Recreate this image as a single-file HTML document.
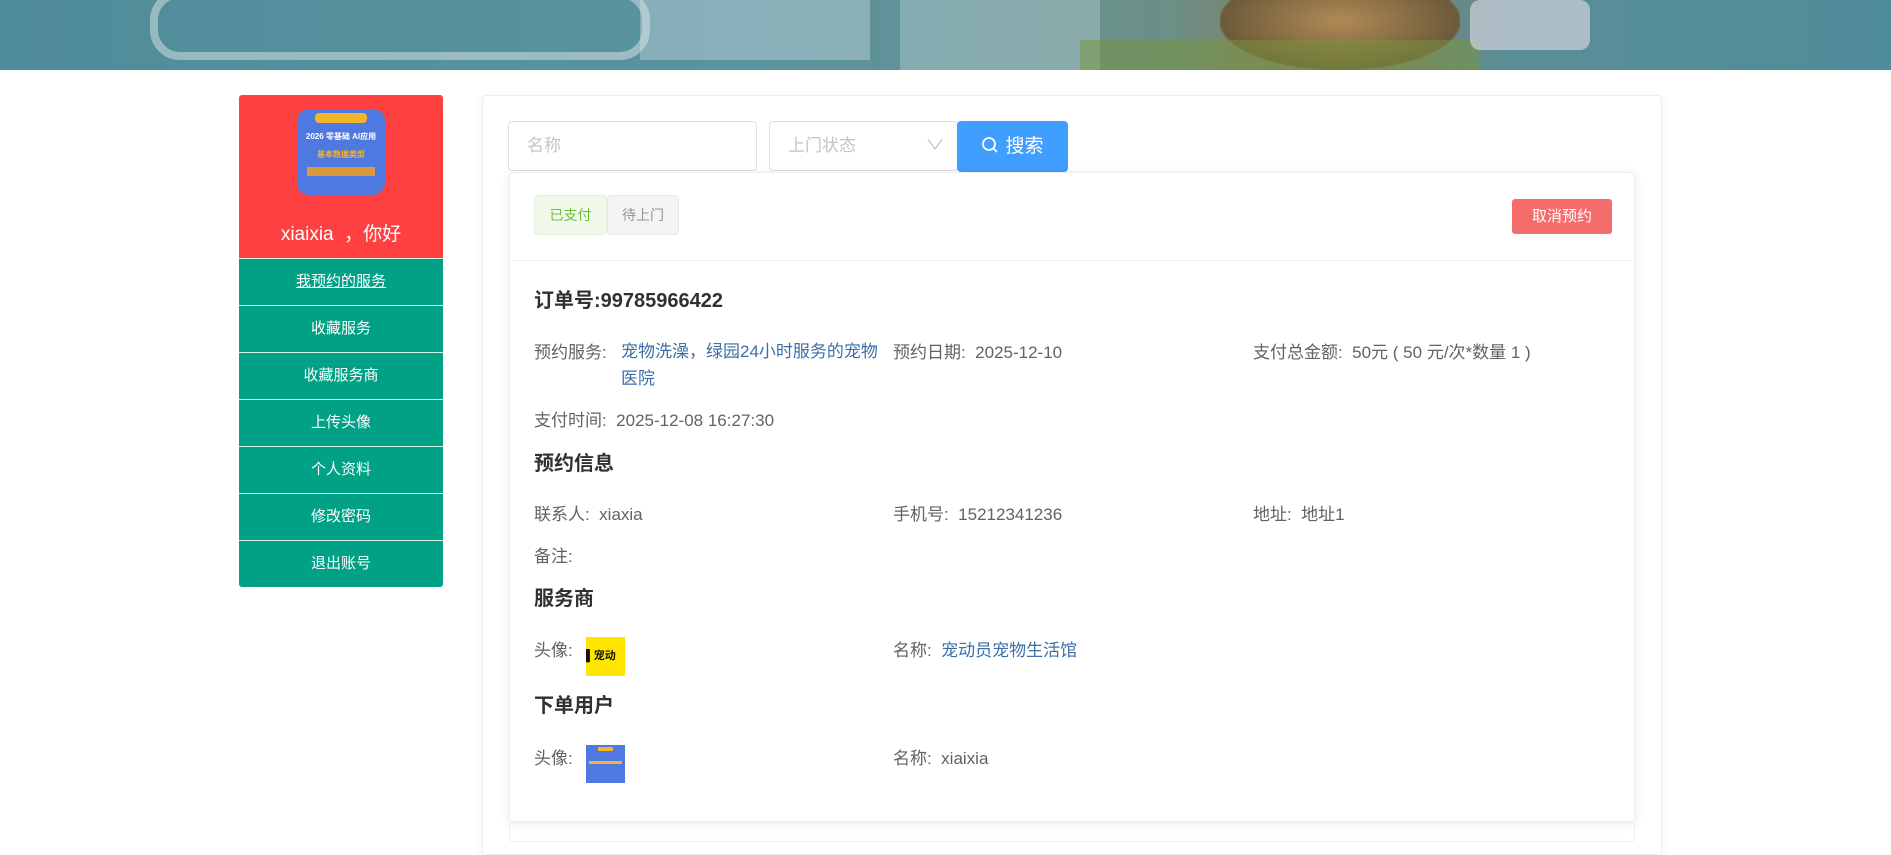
<!DOCTYPE html>
<html><head><meta charset="utf-8"><style>
*{box-sizing:border-box;margin:0;padding:0}
body{width:1891px;height:831px;overflow:hidden;background:#fff;font-family:"Liberation Sans","Noto Sans CJK SC",sans-serif;color:#606266;position:relative}
.banner{position:absolute;left:0;top:0;width:1891px;height:70px;background:linear-gradient(90deg,#4f8c99 0%,#5a94a0 40%,#6c8f86 62%,#8a7a5a 70%,#5a8f98 80%,#4f8c99 100%);overflow:hidden}
.abs{position:absolute}
.side{position:absolute;left:239px;top:95px;width:204px;border-radius:3px;overflow:hidden}
.red{background:#fe4140;height:163px;position:relative}
.av{position:absolute;left:58px;top:14px;width:88px;height:86px;border-radius:12px;background:#4f78e0;overflow:hidden}
.greet{position:absolute;left:0;width:100%;top:124px;text-align:center;color:#fff;font-size:19px}
.mi{height:47px;background:#00a184;color:#fff;text-align:center;line-height:46px;font-size:15px;border-top:1px solid #d6f0ea}
.panel{position:absolute;left:482px;top:95px;width:1180px;height:760px;border:1px solid #ebeef5;border-radius:4px;box-shadow:0 2px 12px rgba(0,0,0,.06)}
.inp{position:absolute;top:121px;height:50px;border:1px solid #dcdfe6;border-radius:4px;color:#c0c4cc;font-size:17px;line-height:48px;padding-left:18px}
.btn{position:absolute;left:957px;top:121px;width:111px;height:51px;background:#409eff;border-radius:4px;color:#fff;font-size:19px;line-height:51px;text-align:center}
.card{position:absolute;left:509px;top:172px;width:1126px;height:650px;border:1px solid #ebeef5;border-radius:4px;box-shadow:0 2px 12px rgba(0,0,0,.08);background:#fff}
.hd{position:absolute;left:0;top:0;width:100%;height:88px;border-bottom:1px solid #ebeef5}
.tag{position:absolute;top:22px;height:40px;line-height:38px;font-size:14px;text-align:center;border-radius:4px;border:1px solid}
.t{position:absolute;font-size:17px;white-space:nowrap}
.h{position:absolute;font-size:20px;font-weight:bold;color:#303133}
.lk{color:#3b6fa6}
</style></head><body>
<div class="banner">
<div class="abs" style="left:150px;top:-10px;width:500px;height:70px;border:8px solid rgba(220,230,230,.5);border-radius:30px"></div>
<div class="abs" style="left:640px;top:0;width:230px;height:60px;background:rgba(220,230,235,.35)"></div>
<div class="abs" style="left:900px;top:0;width:200px;height:70px;background:rgba(200,220,225,.35)"></div>
<div class="abs" style="left:1220px;top:0;width:240px;height:70px;background:radial-gradient(ellipse at 50% 30%,#b08a55,#6d5a3a 70%,transparent 72%)"></div>
<div class="abs" style="left:1080px;top:40px;width:400px;height:30px;background:rgba(120,150,60,.5)"></div>
<div class="abs" style="left:1470px;top:0;width:120px;height:50px;background:rgba(210,210,220,.7);border-radius:10px"></div>
</div>
<div class="side">
<div class="red">
<div class="av">
<div class="abs" style="left:18px;top:4px;width:52px;height:10px;background:#f5b52a;border-radius:4px"></div>
<div class="abs" style="left:0;top:22px;width:88px;text-align:center;color:#fff;font-size:8px;font-weight:bold">2026 零基础 AI应用</div>
<div class="abs" style="left:0;top:40px;width:88px;text-align:center;color:#f5b52a;font-size:8px;font-weight:bold">基本数据类型</div>
<div class="abs" style="left:10px;top:58px;width:68px;height:9px;background:#d99a3a"></div>
</div>
<div class="greet">xiaixia &nbsp;，你好</div>
</div>
<div class="mi" style="text-decoration:underline">我预约的服务</div>
<div class="mi">收藏服务</div>
<div class="mi">收藏服务商</div>
<div class="mi">上传头像</div>
<div class="mi">个人资料</div>
<div class="mi">修改密码</div>
<div class="mi">退出账号</div>
</div>
<div class="panel"></div>
<div class="inp" style="left:508px;width:249px">名称</div>
<div class="inp" style="left:769px;width:189px">上门状态<span style="position:absolute;left:158px;top:-1px;font-size:14px;transform:scaleX(1.4)">∨</span></div>
<div class="btn"><svg width="18" height="18" viewBox="0 0 18 18" style="vertical-align:-2px;margin-right:6px"><circle cx="8" cy="8" r="6" fill="none" stroke="#fff" stroke-width="1.8"/><path d="M12.5 12.5L16 16" stroke="#fff" stroke-width="1.8"/></svg>搜索</div>
<div class="card">
<div class="hd">
<div class="tag" style="left:24px;width:73px;background:#f0f9eb;border-color:#e1f3d8;color:#67c23a">已支付</div>
<div class="tag" style="left:97px;width:72px;background:#f4f4f5;border-color:#e9e9eb;color:#909399">待上门</div>
<div class="abs" style="left:1002px;top:26px;width:100px;height:35px;background:#f56c6c;border-radius:3px;color:#fff;font-size:15px;text-align:center;line-height:35px">取消预约</div>
</div>
<div class="h" style="left:24px;top:111px">订单号:99785966422</div>
<div class="t" style="left:24px;top:165px">预约服务:</div>
<div class="t lk" style="left:111px;top:165px;line-height:27px">宠物洗澡，绿园24小时服务的宠物<br>医院</div>
<div class="t" style="left:383px;top:165px">预约日期:&nbsp; 2025-12-10</div>
<div class="t" style="left:743px;top:165px">支付总金额:&nbsp; 50元 ( 50 元/次*数量 1 )</div>
<div class="t" style="left:24px;top:233px">支付时间:&nbsp; 2025-12-08 16:27:30</div>
<div class="h" style="left:24px;top:274px">预约信息</div>
<div class="t" style="left:24px;top:327px">联系人:&nbsp; xiaxia</div>
<div class="t" style="left:383px;top:327px">手机号:&nbsp; 15212341236</div>
<div class="t" style="left:743px;top:327px">地址:&nbsp; 地址1</div>
<div class="t" style="left:24px;top:369px">备注:</div>
<div class="h" style="left:24px;top:409px">服务商</div>
<div class="t" style="left:24px;top:463px">头像:</div>
<div class="abs" style="left:76px;top:464px;width:39px;height:39px;background:#ffe500;font-size:11px;font-weight:bold;color:#111;line-height:39px;overflow:hidden;white-space:nowrap">▌宠动</div>
<div class="t" style="left:383px;top:463px">名称:&nbsp; <span class="lk">宠动员宠物生活馆</span></div>
<div class="h" style="left:24px;top:516px">下单用户</div>
<div class="t" style="left:24px;top:571px">头像:</div>
<div class="abs" style="left:76px;top:572px;width:39px;height:38px;background:#4f78e0"><div class="abs" style="left:12px;top:2px;width:15px;height:4px;background:#f5b52a"></div><div class="abs" style="left:3px;top:16px;width:33px;height:3px;background:#f5b52a"></div></div>
<div class="t" style="left:383px;top:571px">名称:&nbsp; xiaixia</div>
</div>
<div class="abs" style="left:509px;top:822px;width:1126px;height:20px;border:1px solid #ebeef5;border-radius:4px"></div>
</body></html>
